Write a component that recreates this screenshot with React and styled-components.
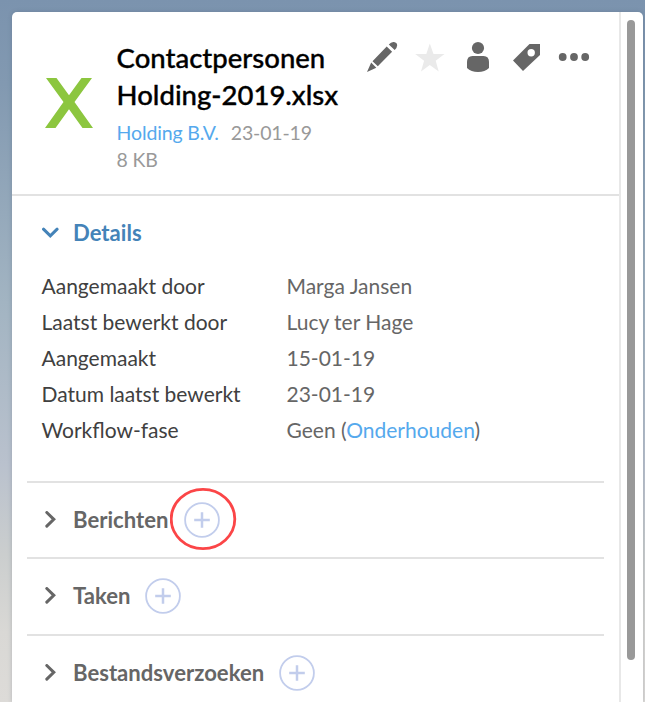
import React from "react";
import styled, { createGlobalStyle } from "styled-components";

const GlobalStyle = createGlobalStyle`
  * { box-sizing: border-box; }
  body { margin: 0; font-family: Lato, sans-serif; overflow: hidden; }
`;

const Page = styled.div`
  height: 702px;
  width: 645px;
  padding: 12px 2px 0 12px;
  overflow: hidden;
  background: linear-gradient(180deg, #7b93ae 0%, #8299b1 12%, #a2b4c2 43%, #b9c1cd 66%, #cbcece 79%, #d9d8d5 90%, #dddbd8 100%);
`;

const Panel = styled.div`
  display: flex;
  height: 690px;
  background: #fff;
  border-radius: 5px 5px 0 0;
  box-shadow: 0 0 4px rgba(60, 75, 95, 0.25);
`;

const Content = styled.main`
  width: 609px;
  border-right: 2px solid #e8e8e8;
`;

const ScrollTrack = styled.div`
  padding: 8px 0 0 6px;
`;

const ScrollThumb = styled.div`
  width: 8px;
  height: 640px;
  border-radius: 4px;
  background: #999;
`;

const Header = styled.header`
  display: flex;
  align-items: flex-start;
  height: 184px;
  padding: 27px 21px 0 33px;
  border-bottom: 2px solid #e2e2e2;
`;

const FileLogo = styled.svg`
  flex: none;
  width: 48px;
  height: 50px;
  margin-top: 39px;
`;

const FileInfo = styled.div`
  width: 240px;
  margin-left: 23.6px;
  white-space: nowrap;
`;

const Title = styled.h1`
  margin: 0 0 6px;
  color: #000;
  font-size: 27.5px;
  font-weight: 500;
  line-height: 37px;
  -webkit-text-stroke: 0.35px currentColor;
`;

const Meta = styled.div`
  display: flex;
  gap: 12px;
  color: #999;
  font-size: 19.5px;
  line-height: 27px;
  letter-spacing: -0.15px;
`;

const Link = styled.a`
  color: #55a9ed;
  text-decoration: none;
`;

const Actions = styled.div`
  display: flex;
  margin: 1px 0 0 13.4px;
`;

const ActionIcon = styled.svg`
  flex: none;
  width: 48px;
  height: 34px;
  fill: ${({ $color }) => $color || "#666"};
`;

const Section = styled.section`
  height: ${({ $height }) => $height}px;
  margin: 0 15px;
  padding-left: 14.5px;
  border-bottom: 2px solid #e2e2e2;
`;

const SectionHeader = styled.div`
  display: flex;
  align-items: center;
  height: 73px;
  color: ${({ $open }) => ($open ? "#4483b8" : "#666")};
`;

const Chevron = styled.svg`
  width: 18px;
  height: 18px;
  margin-right: 13.5px;
  fill: none;
  stroke: currentColor;
  stroke-width: 3;
  stroke-linecap: round;
`;

const SectionTitle = styled.h2`
  margin: 0;
  font-size: 22.1px;
  font-weight: 700;
  line-height: 28px;
`;

const AddButton = styled.button`
  position: relative;
  display: flex;
  width: 36px;
  height: 36px;
  margin: 0 0 0 ${({ $gap }) => $gap}px;
  padding: 0;
  border: 0;
  background: none;
`;

const PlusIcon = styled.svg`
  width: 36px;
  height: 36px;
  fill: none;
  stroke: #c2cdec;
`;

const Highlight = styled.svg`
  position: absolute;
  left: -14px;
  top: -14px;
  width: 67px;
  height: 63px;
  fill: none;
  stroke: #fb4547;
  stroke-width: 2.8;
`;

const DetailGrid = styled.dl`
  display: grid;
  grid-template-columns: 245px 1fr;
  grid-auto-rows: 36px;
  margin: -1px 0 0;
  font-size: 21px;
  line-height: 36px;
`;

const Label = styled.dt`
  color: #404040;
`;

const Value = styled.dd`
  margin: 0;
  color: #666;
`;

const details = [
  ["Aangemaakt door", "Marga Jansen"],
  ["Laatst bewerkt door", "Lucy ter Hage"],
  ["Aangemaakt", "15-01-19"],
  ["Datum laatst bewerkt", "23-01-19"],
  ["Workflow-fase", <>Geen (<Link>Onderhouden</Link>)</>],
];

const sections = [
  { title: "Berichten", height: 76, gap: 16, highlighted: true },
  { title: "Taken", height: 77, gap: 14 },
  { title: "Bestandsverzoeken", height: 77, gap: 15 },
];

function HeaderActions() {
  return (
    <Actions>
      <ActionIcon viewBox="0 0 48 34">
        <path d="M9 32 L13.2 22.5 L18.3 27.7 Z M14.5 21.2 L28.7 6.5 L34.1 11.7 L19.8 26.2 Z M30.8 4.6 Q33.2 1.6 36 2 Q39 2.5 39.2 5.2 Q39.1 7.6 36.7 10 Z" />
      </ActionIcon>
      <ActionIcon viewBox="0 0 48 34" $color="#eaeaea">
        <path d="M23.8 3.5 L27.5 14 H38.5 L29.7 20.8 L32.7 31.5 L23.8 25.1 L15 31.5 L18.1 20.8 L9.2 14 H20.3 Z" />
      </ActionIcon>
      <ActionIcon viewBox="0 0 48 34">
        <circle cx="24" cy="8" r="6.1" />
        <path d="M18.5 16 H29.5 Q35 16 35 22 V28 Q31 32 24 32 Q17 32 13 28 V22 Q13 16 18.5 16 Z" />
      </ActionIcon>
      <ActionIcon viewBox="0 0 48 34">
        <path fillRule="evenodd" d="M27.5 4 H38 V15 L21 31 L11 20.5 Z M32.9 12.8 A3.7 3.7 0 1 0 25.5 12.8 A3.7 3.7 0 1 0 32.9 12.8 Z" />
      </ActionIcon>
      <ActionIcon viewBox="0 0 48 34">
        <circle cx="12.7" cy="17" r="3.9" />
        <circle cx="24" cy="17" r="3.9" />
        <circle cx="35.2" cy="17" r="3.9" />
      </ActionIcon>
    </Actions>
  );
}

function CollapsedSection({ title, height, gap, highlighted }) {
  return (
    <Section $height={height}>
      <SectionHeader>
        <Chevron viewBox="0 0 18 18"><path d="M4.8 1.5 L11.8 8.3 L4.8 15.1" /></Chevron>
        <SectionTitle>{title}</SectionTitle>
        <AddButton $gap={gap} aria-label={`${title} toevoegen`}>
          <PlusIcon viewBox="0 0 36 36">
            <circle cx="18" cy="18" r="16.9" strokeWidth="1.8" />
            <path d="M18 10.2 V25.8 M10.2 18 H25.8" strokeWidth="2.5" />
          </PlusIcon>
          {highlighted && <Highlight viewBox="0 0 67 63"><ellipse cx="33" cy="31" rx="31.8" ry="29.6" /></Highlight>}
        </AddButton>
      </SectionHeader>
    </Section>
  );
}

export default function App() {
  return (
    <>
      <GlobalStyle />
      <Page>
        <Panel>
          <Content>
            <Header>
              <FileLogo viewBox="0 0 48 50">
                <path fill="#8cc63f" d="M1 0 H11.5 L24 17.2 L36.5 0 H47 L29.5 24 L48 50 H37.5 L24 31.3 L10.5 50 H0 L18.5 24 Z" />
              </FileLogo>
              <FileInfo>
                <Title>Contactpersonen<br />Holding-2019.xlsx</Title>
                <Meta><Link>Holding B.V.</Link><span>23-01-19</span></Meta>
                <Meta>8 KB</Meta>
              </FileInfo>
              <HeaderActions />
            </Header>
            <Section $height={287}>
              <SectionHeader $open>
                <Chevron viewBox="0 0 18 18"><path d="M1.5 5.2 L8.3 11.8 L15.1 5.2" /></Chevron>
                <SectionTitle>Details</SectionTitle>
              </SectionHeader>
              <DetailGrid>
                {details.map(([label, value]) => (
                  <React.Fragment key={label}>
                    <Label>{label}</Label>
                    <Value>{value}</Value>
                  </React.Fragment>
                ))}
              </DetailGrid>
            </Section>
            {sections.map((section) => <CollapsedSection key={section.title} {...section} />)}
          </Content>
          <ScrollTrack><ScrollThumb /></ScrollTrack>
        </Panel>
      </Page>
    </>
  );
}
